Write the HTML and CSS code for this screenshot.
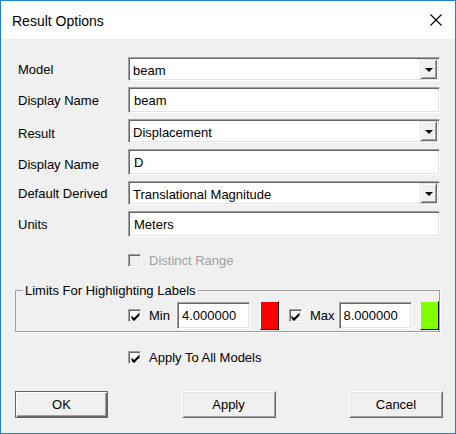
FILE: index.html
```html
<!DOCTYPE html>
<html>
<head>
<meta charset="utf-8">
<link rel="stylesheet" href="styles.css">
</head>
<body>
<div class="window">
  <div class="titlebar">
    <span class="title">Result Options</span>
    <svg class="close" width="12" height="12" viewBox="0 0 12 12"><path d="M0.5 0.5 L11.5 11.5 M11.5 0.5 L0.5 11.5" stroke="#000" stroke-width="1.1" fill="none"/></svg>
  </div>
  <div class="content">
    <div class="form">
      <div class="row">
        <span class="label">Model</span>
        <div class="combo"><span class="value">beam</span><span class="drop"><svg width="8" height="4" viewBox="0 0 8 4"><polygon points="0,0 8,0 4,4" fill="#000"/></svg></span></div>
      </div>
      <div class="row">
        <span class="label">Display Name</span>
        <div class="edit">beam</div>
      </div>
      <div class="row">
        <span class="label lower">Result</span>
        <div class="combo"><span class="value">Displacement</span><span class="drop"><svg width="8" height="4" viewBox="0 0 8 4"><polygon points="0,0 8,0 4,4" fill="#000"/></svg></span></div>
      </div>
      <div class="row">
        <span class="label lower">Display Name</span>
        <div class="edit">D</div>
      </div>
      <div class="row">
        <span class="label">Default Derived</span>
        <div class="combo"><span class="value">Translational Magnitude</span><span class="drop"><svg width="8" height="4" viewBox="0 0 8 4"><polygon points="0,0 8,0 4,4" fill="#000"/></svg></span></div>
      </div>
      <div class="row">
        <span class="label">Units</span>
        <div class="edit">Meters</div>
      </div>
    </div>

    <div class="check-line disabled">
      <span class="checkbox"></span>
      <span class="check-text">Distinct Range</span>
    </div>

    <fieldset class="group">
      <legend class="group-title">Limits For Highlighting Labels</legend>
      <div class="limits">
        <span class="checkbox"><svg width="9" height="9" viewBox="0 0 9 9"><polygon points="0.5,3.5 3,6 8.5,0.5 8.5,3.5 3,9 0.5,6.5" fill="#000"/></svg></span>
        <span class="limit-label">Min</span>
        <div class="edit small min-edit">4.000000</div>
        <span class="swatch red"></span>
        <span class="checkbox max-check"><svg width="9" height="9" viewBox="0 0 9 9"><polygon points="0.5,3.5 3,6 8.5,0.5 8.5,3.5 3,9 0.5,6.5" fill="#000"/></svg></span>
        <span class="limit-label">Max</span>
        <div class="edit small max-edit">8.000000</div>
        <span class="swatch green"></span>
      </div>
    </fieldset>

    <div class="check-line apply-all">
      <span class="checkbox"><svg width="9" height="9" viewBox="0 0 9 9"><polygon points="0.5,3.5 3,6 8.5,0.5 8.5,3.5 3,9 0.5,6.5" fill="#000"/></svg></span>
      <span class="check-text">Apply To All Models</span>
    </div>

    <div class="buttons">
      <button class="btn default">OK</button>
      <button class="btn">Apply</button>
      <button class="btn">Cancel</button>
    </div>
  </div>
</div>
</body>
</html>
```

FILE: styles.css
```css
html, body {
  margin: 0;
  padding: 0;
}
body {
  width: 456px;
  height: 434px;
  font-family: "Liberation Sans", Arial, sans-serif;
  font-size: 13px;
  color: #000;
}
.window {
  box-sizing: border-box;
  width: 456px;
  height: 434px;
  border: 1px solid #1b82d6;
  display: flex;
  flex-direction: column;
  background: #f0f0f0;
}
.titlebar {
  height: 38px;
  flex: none;
  background: #fff;
  display: flex;
  align-items: center;
  justify-content: space-between;
  padding: 0 13px 0 11px;
}
.title {
  font-size: 14px;
  color: #000;
  margin-top: 1px;
}
.close {
  display: block;
}
.content {
  flex: 1;
  padding: 18px 15px 0 14px;
  display: flex;
  flex-direction: column;
}
.form {
  display: flex;
  flex-direction: column;
  gap: 6px;
}
.row {
  display: flex;
  align-items: center;
}
.label {
  width: 110px;
  padding-left: 3px;
  flex: none;
}
.label.lower {
  position: relative;
  top: 2px;
}
.edit, .combo {
  box-sizing: border-box;
  border: 1px solid;
  border-color: #a0a0a0 #fff #fff #a0a0a0;
  box-shadow: inset 1px 1px #696969, inset -1px -1px #e3e3e3;
  background: #fff;
}
.edit {
  flex: 1;
  height: 26px;
  display: flex;
  align-items: center;
  padding: 0 5px;
  line-height: 15px;
}
.combo {
  flex: 1;
  height: 24px;
  display: flex;
  align-items: center;
  padding: 2px;
}
.value {
  flex: 1;
  padding-left: 2px;
  padding-top: 2px;
}
.drop {
  box-sizing: border-box;
  width: 17px;
  height: 20px;
  background: #f0f0f0;
  border: 1px solid;
  border-color: #e3e3e3 #696969 #696969 #e3e3e3;
  box-shadow: inset 1px 1px #fff, inset -1px -1px #a0a0a0;
  display: flex;
  align-items: center;
  justify-content: center;
}
.drop svg {
  display: block;
  margin-top: 1px;
}
.check-line {
  height: 15px;
  display: flex;
  align-items: center;
  padding-left: 113px;
}
.check-line.disabled {
  margin-top: 16px;
}
.check-line.disabled .check-text {
  color: #a0a0a0;
}
.check-line.disabled .checkbox {
  background: #f0f0f0;
}
.checkbox {
  box-sizing: border-box;
  width: 13px;
  height: 13px;
  flex: none;
  border: 1px solid;
  border-color: #a0a0a0 #fff #fff #a0a0a0;
  box-shadow: inset 1px 1px #696969, inset -1px -1px #e3e3e3;
  background: #fff;
  display: flex;
  align-items: center;
  justify-content: center;
}
.checkbox svg {
  display: block;
  margin: 1px 0 0 1px;
}
.check-text {
  margin-left: 8px;
  line-height: 15px;
}
.group {
  margin: 15px 0 0 0;
  padding: 0 0 1px 0;
  min-inline-size: 0;
  border: 1px solid #a0a0a0;
  box-shadow: 1px 1px 0 #fff;
}
.group-title {
  margin-left: 7px;
  padding: 0 2px;
  line-height: 15px;
}
.limits {
  margin-top: 3px;
  height: 29px;
  display: flex;
  align-items: center;
  padding-left: 112px;
}
.limit-label {
  margin-left: 8px;
}
.edit.small {
  flex: none;
  width: 73px;
  height: 27px;
  padding: 0 4px;
}
.min-edit {
  margin-left: 7px;
}
.max-edit {
  margin-left: 4px;
}
.swatch {
  box-sizing: border-box;
  width: 19px;
  height: 29px;
  flex: none;
  margin-left: 10px;
  border: 1px solid;
  border-color: #f0f0f0 #000 #000 #fff;
}
.swatch.red {
  background: #ff0000;
}
.swatch.green {
  background: #80ff00;
  margin-left: 8px;
}
.max-check {
  margin-left: 10px;
}
.check-line.apply-all {
  margin-top: 18px;
}
.buttons {
  margin-top: 26px;
  margin-right: -3px;
  display: flex;
  justify-content: space-between;
}
.btn {
  box-sizing: border-box;
  width: 94px;
  height: 27px;
  font-family: "Liberation Sans", Arial, sans-serif;
  font-size: 13px;
  color: #000;
  background: #f0f0f0;
  border: 1px solid;
  border-color: #fff #696969 #696969 #fff;
  box-shadow: inset 1px 1px #e3e3e3, inset -1px -1px #a0a0a0;
  padding: 0;
  margin: 0;
}
.btn.default {
  width: 93px;
  border-color: #646464;
  box-shadow: inset 1px 1px #fff, inset -1px -1px #696969, inset -2px -2px #a0a0a0;
}
```
